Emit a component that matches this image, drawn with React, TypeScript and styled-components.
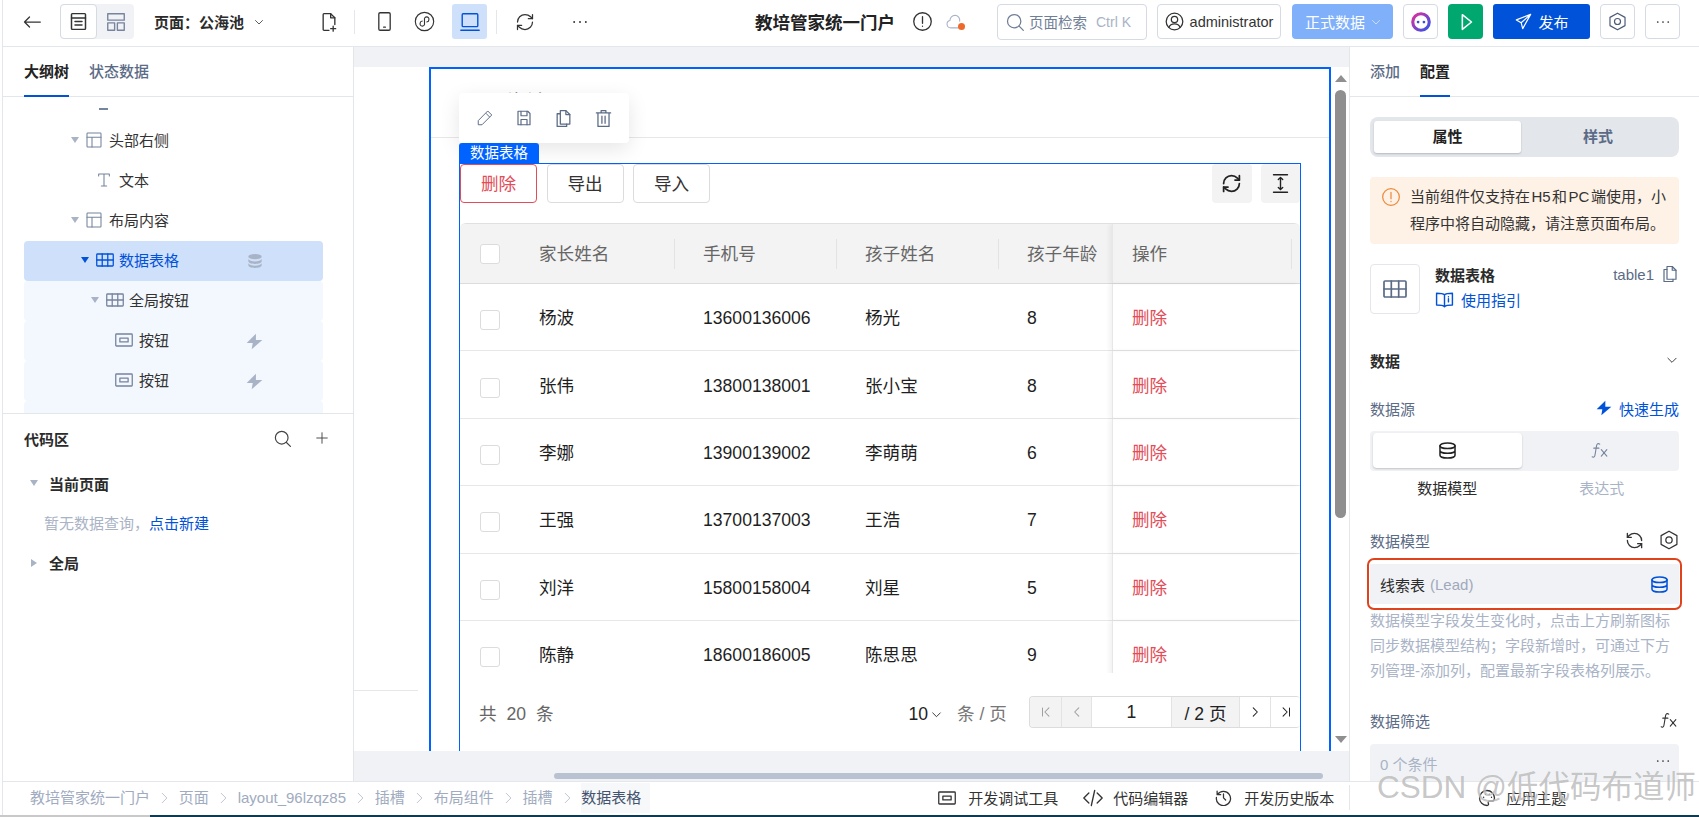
import React from "react";
import styled, { createGlobalStyle } from "styled-components";

const Global = createGlobalStyle`
  html, body { margin: 0; padding: 0; background: #fff; overflow: hidden; }
  body { font-family: "Liberation Sans", "Noto Sans CJK SC", sans-serif; font-size: 15px; color: #222; }
  * { box-sizing: border-box; }
`;

/* ---------- icons ---------- */
type IP = { size?: number; color?: string; sw?: number };
const Svg: React.FC<IP & { children: React.ReactNode; vb?: string }> = ({ size = 18, color = "currentColor", sw = 1.3, vb = "0 0 24 24", children }) => (
  <svg width={size} height={size} viewBox={vb} fill="none" stroke={color} strokeWidth={sw} strokeLinecap="round" strokeLinejoin="round" style={{ flex: "none" }}>
    {children}
  </svg>
);
const BackIcon = (p: IP) => <Svg {...p} sw={1.5}><path d="M22 12H3M9 6l-6 6 6 6" /></Svg>;
const PageIcon = (p: IP) => <Svg {...p} sw={1.7}><rect x="4" y="3" width="16" height="18" rx="1" /><path d="M4 8h16M8 12h8M8 16h8" /></Svg>;
const LayoutIcon = (p: IP) => <Svg {...p} sw={1.5}><rect x="3" y="3" width="18" height="7" /><rect x="3" y="13" width="7.5" height="8" /><rect x="13.5" y="13" width="7.5" height="8" /></Svg>;
const ChevronIcon = (p: IP) => <Svg {...p} sw={1.6}><path d="M5 9l7 7 7-7" /></Svg>;
const FilePlusIcon = (p: IP) => <Svg {...p} sw={1.6}><path d="M12 22H6a1 1 0 01-1-1V3a1 1 0 011-1h8l5 5v8" /><path d="M14 2v5h5M17 17v6M14 20h6" /></Svg>;
const PhoneIcon = (p: IP) => <Svg {...p} sw={1.5}><rect x="5.500" y="2" width="13" height="20" rx="1.500" /><path d="M11 18.500h2" /></Svg>;
const MiniIcon = (p: IP) => <Svg {...p}><circle cx="12" cy="12" r="10.500" /><path d="M7 14a2.600 2.600 0 105 0v-4a2.600 2.600 0 115 0c0 1.500-1 2.400-2.400 2.600M9.400 11.400C8 11.600 7 12.500 7 14" /></Svg>;
const LaptopIcon = (p: IP) => <Svg {...p} sw={1.5}><rect x="3.500" y="3" width="17" height="14" rx="1" /><path d="M2 21h20" /></Svg>;
const RefreshCw = (p: IP) => <Svg {...p} sw={p.sw ?? 1.5}><path d="M3 12a9 9 0 019-9 9.750 9.750 0 016.740 2.740L21 8" /><path d="M21 3v5h-5" /><path d="M21 12a9 9 0 01-9 9 9.750 9.750 0 01-6.740-2.740L3 16" /><path d="M8 16H3v5" /></Svg>;
const RefreshCcw = (p: IP) => <Svg {...p} sw={p.sw ?? 1.7}><path d="M21 12a9 9 0 00-9-9 9.750 9.750 0 00-6.740 2.740L3 8" /><path d="M3 3v5h5" /><path d="M3 12a9 9 0 009 9 9.750 9.750 0 006.740-2.740L21 16" /><path d="M16 16h5v5" /></Svg>;
const DotsIcon = (p: IP) => <Svg {...p} sw={2.300}><path d="M5 12h.01M12 12h.01M19 12h.01" /></Svg>;
const AlertIcon = (p: IP) => <Svg {...p} sw={1.500}><circle cx="12" cy="12" r="10" /><path d="M12 6.500v7.500M12 17.300v.2" /></Svg>;
const CloudIcon = (p: IP) => <Svg {...p}><path d="M16 19H7a4.500 4.500 0 01-1-8.900A6 6 0 0112 4a6 6 0 015.600 7" /></Svg>;
const SearchIcon = (p: IP) => <Svg {...p} sw={1.500}><circle cx="11" cy="11" r="8" /><path d="M17 17l5 5" /></Svg>;
const UserIcon = (p: IP) => <Svg {...p} sw={1.600}><circle cx="12" cy="12" r="10.500" /><circle cx="12" cy="9.500" r="4" /><path d="M5 19.500c1-3 3.600-4.500 7-4.500s6 1.500 7 4.500" /></Svg>;
const AiIcon = () => (
  <svg width="22" height="22" viewBox="0 0 24 24" style={{ flex: "none" }}>
    <defs>
      <linearGradient id="ai" x1="0" y1="0" x2="1" y2="1">
        <stop offset="0" stopColor="#e02f9a" />
        <stop offset="1" stopColor="#2f54eb" />
      </linearGradient>
    </defs>
    <circle cx="12" cy="12" r="9" fill="none" stroke="url(#ai)" strokeWidth="3.400" />
    <circle cx="8.800" cy="12" r="1.500" fill="#3a4fd8" />
    <circle cx="15.200" cy="12" r="1.500" fill="#3a4fd8" />
  </svg>
);
const PlayIcon = (p: IP) => <Svg {...p} sw={1.700}><path d="M8 4l10 8-10 8z" /></Svg>;
const SendIcon = (p: IP) => <Svg {...p} sw={1.500}><path d="M21 3L3 10l6 3.500L11 21zM21 3L9 13.500" /></Svg>;
const HexIcon = (p: IP) => <Svg {...p} sw={1.500}><path d="M12 1.500l9.500 5.300v10.400L12 22.500l-9.500-5.300V6.800z" /><circle cx="12" cy="12" r="3.800" /></Svg>;
const LayoutTreeIcon = (p: IP) => <Svg {...p} sw={1.600}><rect x="1.500" y="1.500" width="21" height="21" rx="1" /><path d="M1.500 8h21M9 8v14.500" /></Svg>;
const TableIcon = (p: IP) => <Svg {...p} sw={1.700}><rect x="1" y="4" width="22" height="16" rx="1" /><path d="M1 12h22M8.300 4v16M15.700 4v16" /></Svg>;
const ButtonIcon = (p: IP) => <Svg {...p} sw={1.700}><rect x="1" y="4" width="22" height="16" rx="1" /><rect x="6.500" y="9.500" width="11" height="5" /></Svg>;
const TextIcon = (p: IP) => <Svg {...p} sw={1.600}><path d="M4 6V3h16v3M12 3v18M8 21h8" /></Svg>;
const DbIcon = (p: IP) => <Svg {...p} sw={1.900}><ellipse cx="12" cy="6" rx="9.500" ry="3.600" /><path d="M2.500 6v12c0 2 4.200 3.600 9.500 3.600s9.500-1.600 9.500-3.600V6M2.500 12c0 2 4.200 3.600 9.500 3.600s9.500-1.600 9.500-3.600" /></Svg>;
const DbFillIcon = ({ size = 18, color = "#a9b3c6" }: IP) => (
  <svg width={size} height={size} viewBox="0 0 24 24" fill={color} style={{ flex: "none" }}>
    <ellipse cx="12" cy="5.500" rx="10" ry="4" />
    <path d="M2 9c1 2.400 5 3.600 10 3.600S21 11.400 22 9v3.500c0 2.200-4.500 4-10 4s-10-1.800-10-4z" />
    <path d="M2 15.500c1 2.400 5 3.600 10 3.600s9-1.200 10-3.600v3c0 2.200-4.500 4-10 4s-10-1.800-10-4z" />
  </svg>
);
const BoltIcon = ({ size = 18, color = "#a9b3c6" }: IP) => (
  <svg width={size} height={size} viewBox="0 0 24 24" fill={color} style={{ flex: "none" }}>
    <path d="M14 1L1 14h8.500L8 23l15-13h-9z" />
  </svg>
);
const PencilIcon = (p: IP) => <Svg {...p}><path d="M16 3l5 5L8 21H3v-5zM13.500 6l4.500 4.500" /></Svg>;
const SaveIcon = (p: IP) => <Svg {...p} sw={1.600}><path d="M4 3h13l3 3v15H4z" /><path d="M8 3v6h8V3M8 21v-7h8v7" /></Svg>;
const CopyIcon = (p: IP) => <Svg {...p} sw={1.600}><path d="M8 2h7l5 5v12H8z" /><path d="M15 2v5h5M8 6H4v16h12v-3" /></Svg>;
const TrashIcon = (p: IP) => <Svg {...p} sw={1.600}><path d="M3 5h18M9 5V2h6v3M5 5v17h14V5M10 9v9M14 9v9" /></Svg>;
const ExpandIcon = (p: IP) => <Svg {...p} sw={1.600}><path d="M4 2h16M4 22h16M12 5v14M9.500 7.500L12 5l2.500 2.500M9.500 16.500L12 19l2.500-2.500" /></Svg>;
const PlusIcon = (p: IP) => <Svg {...p} sw={1.600}><path d="M12 3v18M3 12h18" /></Svg>;
const ChevronLeftIcon = (p: IP) => <Svg {...p} sw={1.800}><path d="M15 5l-7 7 7 7" /></Svg>;
const ChevronRightIcon = (p: IP) => <Svg {...p} sw={1.800}><path d="M9 5l7 7-7 7" /></Svg>;
const CrumbArrow = (p: IP) => <Svg {...p} sw={1.300}><path d="M9 4l8 8-8 8" /></Svg>;
const FirstIcon = (p: IP) => <Svg {...p} sw={1.800}><path d="M6 5v14M17 5l-7 7 7 7" /></Svg>;
const LastIcon = (p: IP) => <Svg {...p} sw={1.800}><path d="M18 5v14M7 5l7 7-7 7" /></Svg>;
const BookIcon = (p: IP) => <Svg {...p} sw={1.800}><path d="M12 6C10 4 6 4 2 4v15c4 0 8 0 10 2 2-2 6-2 10-2V4c-4 0-8 0-10 2zM12 6v15" /><path d="M17 8.500v.2M17 11v4" /></Svg>;
const FxIcon = (p: IP) => <Svg {...p} sw={1.400}><path d="M11 4c-2-1.500-3.500-.5-4 2L5 18c-.5 2.500-2 3-3.500 2M3.500 9H10M13 11l7 8M20 11l-7 8" /></Svg>;
const CodeIcon = (p: IP) => <Svg {...p} sw={1.600}><path d="M7 6l-6 6 6 6M17 6l6 6-6 6M14 3l-4 18" /></Svg>;
const HistoryIcon = (p: IP) => <Svg {...p} sw={1.800}><path d="M3.500 8A10 10 0 112 12M3 3v5h5M12 7v5.500l3 3" /></Svg>;
const PaletteIcon = (p: IP) => <Svg {...p} sw={1.700}><path d="M12 2a10 10 0 100 20c2 0 2.500-1.500 1.800-2.800-.8-1.500 0-3.200 2-3.200H19c2 0 3-1.500 3-4 0-5.500-4.500-10-10-10z" /><path d="M7.500 11v.2M10 7v.2M15 7v.2M18 11v.2" /></Svg>;

/* ---------- shell ---------- */
const Shell = styled.div`
  position: relative;
  width: 1699px;
  height: 817px;
  overflow: hidden;
  display: flex;
  flex-direction: column;
  padding-left: 2px;
`;
const Framed = styled.div`
  border-left: 1px solid #e3e6eb;
  flex: 1;
  min-height: 0;
  display: flex;
  flex-direction: column;
`;
const TopBar = styled.header`
  height: 47px;
  flex: none;
  display: flex;
  align-items: center;
  border-bottom: 1px solid #e3e6eb;
  padding: 0 19px 3px 19px;
`;
const Slot = styled.div<{ $ml?: number }>`
  display: flex;
  align-items: center;
  flex: none;
  margin-left: ${(p) => p.$ml ?? 0}px;
`;
const ViewToggle = styled.div`
  display: flex;
  width: 74px;
  height: 35px;
  margin-left: 18px;
  background: #f0f2f5;
  border-radius: 4px;
`;
const ViewOption = styled.div<{ $on?: boolean }>`
  width: 37px;
  display: flex;
  align-items: center;
  justify-content: center;
  border-radius: 4px;
  color: ${(p) => (p.$on ? "#333" : "#76849e")};
  background: ${(p) => (p.$on ? "#fff" : "transparent")};
  border: ${(p) => (p.$on ? "1px solid #d5dae3" : "none")};
`;
const PageName = styled.div`
  margin-left: 20px;
  font-weight: 700;
  font-size: 15px;
  color: #2b2b2b;
  width: 90px;
  white-space: nowrap;
`;
const Sep = styled.div<{ $ml: number }>`
  width: 1px;
  height: 24px;
  background: #e3e6eb;
  margin-left: ${(p) => p.$ml}px;
  flex: none;
`;
const ActiveDevice = styled.div<{ $ml: number }>`
  width: 35px;
  height: 35px;
  margin-left: ${(p) => p.$ml}px;
  border-radius: 3px;
  background: #cfe0fb;
  color: #0052d9;
  display: flex;
  align-items: center;
  justify-content: center;
`;
const AppTitle = styled.div`
  margin-left: 165px;
  width: 140px;
  font-size: 17.500px;
  font-weight: 700;
  color: #222;
  white-space: nowrap;
`;
const RightTools = styled.div`
  margin-left: auto;
  display: flex;
  align-items: center;
  gap: 10px;
`;
const SearchBox = styled.div`
  width: 150px;
  height: 36px;
  border: 1px solid #d5dae3;
  border-radius: 4px;
  display: flex;
  align-items: center;
  padding-left: 7px;
  gap: 4px;
  color: #6f7d95;
  font-size: 14.500px;
  white-space: nowrap;
`;
const Hint = styled.span`
  color: #a9b3c6;
  margin-left: 5px;
  font-size: 14px;
`;
const UserBox = styled.div`
  width: 124px;
  height: 35px;
  border: 1px solid #d5dae3;
  border-radius: 4px;
  display: flex;
  align-items: center;
  justify-content: center;
  gap: 6px;
  color: #333;
  font-size: 14.500px;
`;
const EnvButton = styled.div`
  width: 101px;
  height: 35px;
  margin-left: 1px;
  border-radius: 4px;
  background: #80b0fa;
  color: #fff;
  display: flex;
  align-items: center;
  padding-left: 13px;
  gap: 5px;
  font-size: 15px;
  white-space: nowrap;
`;
const SquareBtn = styled.div<{ $bg?: string; $fg?: string }>`
  width: 35px;
  height: 35px;
  border-radius: 4px;
  border: ${(p) => (p.$bg ? "none" : "1px solid #d5dae3")};
  background: ${(p) => p.$bg ?? "#fff"};
  color: ${(p) => p.$fg ?? "#4b5b76"};
  display: flex;
  align-items: center;
  justify-content: center;
`;
const PublishBtn = styled.div`
  width: 97px;
  height: 35px;
  border-radius: 3px;
  background: #0052d9;
  color: #fff;
  display: flex;
  align-items: center;
  justify-content: center;
  gap: 5px;
  font-size: 15px;
`;
const CloudWrap = styled.div`
  position: relative;
  margin-left: 12px;
  width: 20px;
  height: 20px;
  color: #a9b3c6;
`;
const CloudDot = styled.span`
  position: absolute;
  right: 0;
  bottom: 2px;
  width: 7px;
  height: 7px;
  border-radius: 50%;
  background: #ed6a2c;
`;

const Body = styled.div`
  flex: 1;
  min-height: 0;
  display: flex;
`;

/* ---------- left ---------- */
const LeftPanel = styled.aside`
  width: 351px;
  flex: none;
  border-right: 1px solid #e3e6eb;
  display: flex;
  flex-direction: column;
`;
const Tabs = styled.div<{ $left: number }>`
  height: 50px;
  flex: none;
  border-bottom: 1px solid #e3e6eb;
  display: flex;
  gap: 20px;
  padding-left: ${(p) => p.$left}px;
`;
const Tab = styled.div<{ $on?: boolean }>`
  height: 50px;
  padding-bottom: 1px;
  display: flex;
  align-items: center;
  font-size: 15px;
  font-weight: ${(p) => (p.$on ? 700 : 500)};
  color: ${(p) => (p.$on ? "#222" : "#5b6b86")};
  border-bottom: 2px solid ${(p) => (p.$on ? "#0052d9" : "transparent")};
`;
const TreeClip = styled.div`
  height: 317px;
  flex: none;
  overflow: hidden;
  border-bottom: 1px solid #e3e6eb;
  padding: 0 30px 0 21px;
`;
const TreeList = styled.div`
  margin-top: -16px;
`;
const TreeRow = styled.div<{ $pad: number; $tone?: "on" | "soft" }>`
  height: 40px;
  display: flex;
  align-items: center;
  border-radius: 4px;
  padding: 0 60px 3px ${(p) => p.$pad}px;
  font-size: 15px;
  color: ${(p) => (p.$tone === "on" ? "#0052d9" : "#333")};
  background: ${(p) => (p.$tone === "on" ? "#cfe0fb" : p.$tone === "soft" ? "#f3f7fe" : "transparent")};
  & > svg { color: ${(p) => (p.$tone === "on" ? "#0052d9" : "#76849e")}; }
`;
const TreeStub = styled.span`
  width: 9px;
  height: 2px;
  margin: 18px 0 0 3px;
  background: #76849e;
`;
const Caret = styled.span<{ $on?: boolean; $side?: boolean }>`
  flex: none;
  width: 0;
  height: 0;
  margin-right: 7px;
  ${(p) =>
    p.$side
      ? `border-top: 4px solid transparent; border-bottom: 4px solid transparent; border-left: 6px solid #a9b3c6; margin-left: 1px; margin-right: 8px;`
      : `border-left: 4px solid transparent; border-right: 4px solid transparent; border-top: 6px solid ${p.$on ? "#0052d9" : "#a9b3c6"};`}
`;
const RowLabel = styled.span<{ $ml?: number }>`
  margin-left: ${(p) => p.$ml ?? 7}px;
`;
const RowEnd = styled.span`
  margin-left: auto;
  display: flex;
  margin-top: 3px;
`;
const CodeArea = styled.div`
  flex: 1;
  padding: 0 24px 0 21px;
`;
const CodeHead = styled.div`
  height: 48px;
  display: flex;
  align-items: center;
  font-weight: 700;
  color: #2b2b2b;
`;
const CodeTools = styled.div`
  margin-left: auto;
  display: flex;
  align-items: center;
  gap: 23px;
  color: #444;
`;
const CodeGroup = styled.div<{ $mt: number }>`
  height: 24px;
  margin-top: ${(p) => p.$mt}px;
  display: flex;
  align-items: center;
  padding-left: 6px;
  font-weight: 700;
  color: #2b2b2b;
  gap: 3px;
`;
const GroupName = styled.span`
  margin-left: 1px;
`;
const EmptyHint = styled.div`
  height: 24px;
  margin-top: 15.500px;
  padding-left: 20px;
  display: flex;
  align-items: center;
  color: #a9b3c6;
`;
const LinkText = styled.span`
  color: #0052d9;
`;

/* ---------- canvas ---------- */
const Canvas = styled.main`
  flex: 1;
  min-width: 0;
  display: flex;
  flex-direction: column;
  background: #f0f2f5;
`;
const CanvasTop = styled.div`
  height: 20px;
  flex: none;
`;
const Stage = styled.div`
  height: 684px;
  flex: none;
  background: #fff;
  display: flex;
`;
const Gutter = styled.div`
  width: 75px;
  flex: none;
`;
const GutterRule = styled.div`
  width: 64px;
  height: 1px;
  margin-top: 623px;
  background: #e7e7e7;
`;
const Frame = styled.div`
  position: relative;
  width: 902px;
  flex: none;
  border: 2px solid #0062ff;
  border-bottom: none;
`;
const PageHeader = styled.div`
  height: 69px;
  border-bottom: 1px solid #e7e7e7;
  padding: 22px 0 0 56px;
  font-size: 20px;
  line-height: 24px;
  color: #333;
`;
const FloatBar = styled.div`
  position: absolute;
  left: 28px;
  top: 24px;
  width: 170px;
  height: 50px;
  background: #fff;
  border-radius: 4px;
  box-shadow: 0 6px 20px rgba(0, 0, 0, 0.1);
  display: flex;
  align-items: center;
  padding-left: 17px;
  gap: 21px;
  color: #5b6b86;
  z-index: 2;
`;
const SelectTag = styled.div`
  position: absolute;
  left: 28px;
  top: 74px;
  width: 80px;
  height: 20px;
  background: #0062ff;
  color: #fff;
  border-radius: 3px 3px 0 0;
  font-size: 14.500px;
  line-height: 20px;
  text-align: center;
  z-index: 2;
`;
const TableBlock = styled.section`
  margin: 25px 0 0 28px;
  width: 842px;
  height: 588px;
  border: 1px solid #0062ff;
  border-bottom: none;
`;
const ActionBar = styled.div`
  height: 39px;
  display: flex;
  gap: 9.500px;
  margin-bottom: 20px;
`;
const ActionBtn = styled.div<{ $danger?: boolean }>`
  width: 77px;
  height: 39px;
  padding-bottom: 2px;
  border-radius: 4px;
  border: 1px solid ${(p) => (p.$danger ? "#e34d59" : "#dcdcdc")};
  color: ${(p) => (p.$danger ? "#e34d59" : "#333")};
  font-size: 17.600px;
  display: flex;
  align-items: center;
  justify-content: center;
`;
const IconAction = styled.div<{ $first?: boolean; $w: number }>`
  width: ${(p) => p.$w}px;
  height: 39px;
  border-radius: 4px;
  background: #f3f3f3;
  color: #222;
  display: flex;
  align-items: center;
  justify-content: center;
  margin-left: ${(p) => (p.$first ? "auto" : "0")};
`;
const TableClip = styled.div`
  height: 450px;
  overflow: hidden;
  border-top: 1px solid #e0e0e0;
  border-radius: 6px 6px 0 0;
`;
const GridRow = styled.div<{ $head?: boolean }>`
  display: grid;
  grid-template-columns: 79px 164px 162px 162px 85px 1fr;
  align-items: center;
  height: ${(p) => (p.$head ? "60px" : "67.400px")};
  background: ${(p) => (p.$head ? "#f3f3f3" : "#fff")};
  border-bottom: 1px solid ${(p) => (p.$head ? "#dcdcdc" : "#e7e7e7")};
  font-size: 17.600px;
  line-height: 26px;
  color: ${(p) => (p.$head ? "#666" : "#1f1f1f")};
`;
const CheckCell = styled.div<{ $head?: boolean }>`
  padding-left: 20px;
  display: flex;
  margin-top: ${(p) => (p.$head ? "0" : "6px")};
`;
const CheckBox = styled.span`
  width: 20px;
  height: 20px;
  background: #fff;
  border: 1px solid #dcdcdc;
  border-radius: 3px;
`;
const HeadCell = styled.div<{ $sep?: boolean }>`
  height: 30px;
  line-height: 30px;
  margin-right: 28px;
  border-right: 1px solid ${(p) => (p.$sep ? "#e3e3e3" : "transparent")};
  white-space: nowrap;
`;
const BodyCell = styled.div`
  white-space: nowrap;
  padding-top: 2px;
`;
const FixedCell = styled.div<{ $danger?: boolean }>`
  height: 100%;
  display: flex;
  align-items: center;
  padding: ${(p) => (p.$danger ? "2px" : "0")} 0 0 19px;
  border-left: 1px solid #e7e7e7;
  box-shadow: -3px 0 4px rgba(0, 0, 0, 0.05);
  color: ${(p) => (p.$danger ? "#e34d59" : "inherit")};
`;
const FixedLabel = styled.span`
  flex: 1;
  margin-right: 8px;
  border-right: 1px solid #e3e3e3;
  height: 30px;
  line-height: 30px;
`;
const TableFoot = styled.div`
  display: flex;
  align-items: flex-start;
  padding: 23px 0 0 19px;
  font-size: 17.600px;
  color: #666;
  height: 78px;
`;
const Total = styled.div`
  line-height: 36px;
  word-spacing: 5px;
`;
const PageSize = styled.div`
  margin-left: auto;
  display: flex;
  align-items: center;
  height: 36px;
  color: #222;
  gap: 2px;
`;
const PerPage = styled.div`
  line-height: 36px;
  margin-left: 14px;
  color: #777;
  width: 72px;
`;
const Pager = styled.div`
  display: flex;
  height: 32px;
  width: 271px;
  border: 1px solid #dcdcdc;
  border-right: none;
  border-radius: 4px;
  overflow: hidden;
`;
const PagerCell = styled.div<{ $w: number; $grey?: boolean; $fg?: string }>`
  width: ${(p) => p.$w}px;
  flex: none;
  background: ${(p) => (p.$grey ? "#f3f3f3" : "#fff")};
  border-left: 1px solid #e3e3e3;
  color: ${(p) => p.$fg ?? "#222"};
  display: flex;
  align-items: center;
  justify-content: center;
  &:first-child { border-left: none; }
`;
const VScroll = styled.div`
  flex: 1;
  display: flex;
  flex-direction: column;
  align-items: center;
  padding: 8px 0 8px;
  margin-left: 1px;
`;
const ArrowUp = styled.span`
  width: 0;
  height: 0;
  border-left: 6px solid transparent;
  border-right: 6px solid transparent;
  border-bottom: 7px solid #8f8f8f;
`;
const ArrowDown = styled.span`
  width: 0;
  height: 0;
  margin-top: auto;
  border-left: 6px solid transparent;
  border-right: 6px solid transparent;
  border-top: 7px solid #8f8f8f;
`;
const Thumb = styled.div`
  width: 11px;
  height: 428px;
  margin-top: 8px;
  border-radius: 6px;
  background: #8f8f8f;
`;
const CanvasBottom = styled.div`
  flex: 1;
  padding: 22px 0 0 200px;
`;
const HThumb = styled.div`
  width: 769px;
  height: 6px;
  border-radius: 3px;
  background: #b8c2d0;
`;

/* ---------- right ---------- */
const RightPanel = styled.aside`
  width: 350px;
  flex: none;
  border-left: 1px solid #e3e6eb;
  overflow: hidden;
  display: flex;
  flex-direction: column;
`;
const PanelSection = styled.div`
  padding: 0 20px;
`;
const Segment = styled.div`
  margin-top: 20px;
  height: 40px;
  border-radius: 8px;
  background: #e3e6eb;
  padding: 4px;
  display: flex;
`;
const SegItem = styled.div<{ $on?: boolean }>`
  flex: ${(p) => (p.$on ? "0 0 147px" : "1")};
  padding-bottom: 3px;
  border-radius: 3px;
  background: ${(p) => (p.$on ? "#fff" : "transparent")};
  box-shadow: ${(p) => (p.$on ? "0 1px 2px rgba(0,0,0,.2)" : "none")};
  color: ${(p) => (p.$on ? "#222" : "#5b6b86")};
  font-weight: 700;
  display: flex;
  align-items: center;
  justify-content: center;
`;
const Notice = styled.div`
  margin-top: 20px;
  height: 67px;
  border-radius: 4px;
  background: #fef1e6;
  padding: 6px 0 0 11px;
  display: flex;
  gap: 9px;
  line-height: 27px;
  color: #333;
  white-space: nowrap;
  word-spacing: -2.700px;
`;
const NoticeIcon = styled.div`
  padding-top: 4px;
  color: #ed8a3a;
`;
const CompCard = styled.div`
  margin-top: 20px;
  height: 50px;
  display: flex;
`;
const CompThumb = styled.div`
  width: 50px;
  height: 50px;
  border: 1px solid #e3e6eb;
  border-radius: 4px;
  display: flex;
  align-items: center;
  justify-content: center;
  color: #5b6b86;
`;
const CompInfo = styled.div`
  margin: -2px 0 0 15px;
  flex: 1;
`;
const CompTitleRow = styled.div`
  display: flex;
  align-items: center;
  height: 24px;
  font-weight: 700;
  color: #2b2b2b;
`;
const CompId = styled.span`
  margin-left: auto;
  display: flex;
  align-items: center;
  gap: 7px;
  font-weight: 400;
  color: #5b6b86;
`;
const GuideLink = styled.div`
  display: flex;
  align-items: center;
  gap: 7px;
  height: 26px;
  color: #0052d9;
`;
const PanelRule = styled.div`
  margin-top: 23px;
  height: 1px;
  background: #e3e6eb;
`;
const GroupHead = styled.div`
  height: 46px;
  display: flex;
  align-items: center;
  justify-content: space-between;
  font-weight: 700;
  color: #2b2b2b;
`;
const FieldHead = styled.div<{ $mt: number }>`
  margin-top: ${(p) => p.$mt}px;
  height: 24px;
  display: flex;
  align-items: center;
  color: #5b6b86;
`;
const FieldEnd = styled.div<{ $gap?: number; $fg?: string }>`
  margin-left: auto;
  display: flex;
  align-items: center;
  gap: ${(p) => p.$gap ?? 7}px;
  color: ${(p) => p.$fg ?? "#333"};
`;
const SourceSeg = styled.div`
  margin-top: 11px;
  height: 40px;
  border-radius: 4px;
  background: #f0f2f5;
  padding: 2px 0 3px 3px;
  display: flex;
`;
const SourceItem = styled.div<{ $on?: boolean }>`
  flex: ${(p) => (p.$on ? "0 0 149px" : "1")};
  border-radius: 4px;
  background: ${(p) => (p.$on ? "#fff" : "transparent")};
  box-shadow: ${(p) => (p.$on ? "0 1px 2px rgba(0,0,0,.2)" : "none")};
  color: ${(p) => (p.$on ? "#222" : "#76849e")};
  display: flex;
  align-items: center;
  justify-content: center;
`;
const SourceLabels = styled.div`
  margin-top: 8px;
  height: 20px;
  display: flex;
`;
const SourceLabel = styled.div<{ $on?: boolean }>`
  flex: 1;
  text-align: center;
  line-height: 20px;
  color: ${(p) => (p.$on ? "#2b2b2b" : "#a9b3c6")};
`;
const ModelOutline = styled.div`
  margin: 6px -3px 0;
  height: 52px;
  border: 2px solid #e0431c;
  border-radius: 7px;
  padding: 4px 1px;
`;
const ModelSelect = styled.div`
  height: 40px;
  background: #f0f2f5;
  display: flex;
  align-items: center;
  padding: 0 10px;
  color: #2b2b2b;
`;
const Muted = styled.span`
  color: #a0a9bb;
  margin-left: 5px;
`;
const Desc = styled.div`
  margin-top: -2px;
  line-height: 25px;
  color: #a9b3c6;
`;
const FilterBox = styled.div`
  margin-top: 12px;
  height: 60px;
  background: #f0f2f5;
  border-radius: 4px;
  padding: 8px 7px 0 10px;
  display: flex;
  align-items: flex-start;
  color: #a9b3c6;
  line-height: 26px;
`;

/* ---------- bottom ---------- */
const BottomBar = styled.footer`
  height: 34px;
  flex: none;
  border-top: 1px solid #e3e6eb;
  display: flex;
  align-items: center;
  padding: 0 0 2px 27px;
  font-size: 15px;
`;
const Crumb = styled.span<{ $on?: boolean }>`
  color: ${(p) => (p.$on ? "#44546f" : "#a0abc0")};
  background: ${(p) => (p.$on ? "#f7f8fa" : "transparent")};
  padding-right: ${(p) => (p.$on ? "9px" : "0")};
  line-height: 30px;
`;
const CrumbSep = styled.span`
  width: 28.800px;
  display: flex;
  justify-content: center;
  color: #a9b3c6;
`;
const DevTool = styled.div<{ $ml: number; $gap: number }>`
  margin-left: ${(p) => p.$ml}px;
  display: flex;
  align-items: center;
  gap: ${(p) => p.$gap}px;
  color: #333;
  white-space: nowrap;
`;
const BarDivider = styled.div`
  width: 1px;
  height: 25px;
  background: #e3e6eb;
  margin-left: 15px;
`;
const Strip = styled.div`
  height: 2px;
  flex: none;
  display: flex;
  background: #0e3a52;
  margin-left: -2px;
`;
const StripStart = styled.div`
  width: 150px;
  background: #c9c9c9;
`;
const Watermark = styled.div`
  position: absolute;
  left: 1377px;
  top: 767px;
  font-size: 31.500px;
  line-height: 40px;
  color: rgba(120, 120, 120, 0.42);
  text-shadow: 0 0 1px rgba(255, 255, 255, 0.8);
  white-space: nowrap;
  pointer-events: none;
`;

const rows = [
  ["杨波", "13600136006", "杨光", "8"],
  ["张伟", "13800138001", "张小宝", "8"],
  ["李娜", "13900139002", "李萌萌", "6"],
  ["王强", "13700137003", "王浩", "7"],
  ["刘洋", "15800158004", "刘星", "5"],
  ["陈静", "18600186005", "陈思思", "9"],
];
const crumbs = ["教培管家统一门户", "页面", "layout_96lzqz85", "插槽", "布局组件", "插槽"];

export default function App() {
  return (
    <Shell>
      <Global />
      <Framed>
        <TopBar>
          <Slot><BackIcon size={20} color="#333" /></Slot>
          <ViewToggle>
            <ViewOption $on><PageIcon size={21} /></ViewOption>
            <ViewOption><LayoutIcon size={22} /></ViewOption>
          </ViewToggle>
          <PageName>页面：公海池</PageName>
          <Slot $ml={9}><ChevronIcon size={12} color="#333" /></Slot>
          <Slot $ml={54}><FilePlusIcon size={20} color="#333" /></Slot>
          <Sep $ml={15} />
          <Slot $ml={19}><PhoneIcon size={21} color="#333" /></Slot>
          <Slot $ml={19}><MiniIcon size={21} color="#333" /></Slot>
          <ActiveDevice $ml={17}><LaptopIcon size={22} /></ActiveDevice>
          <Sep $ml={9} />
          <Slot $ml={18}><RefreshCw size={20} color="#333" /></Slot>
          <Slot $ml={35}><DotsIcon size={20} color="#333" /></Slot>
          <AppTitle>教培管家统一门户</AppTitle>
          <Slot $ml={17}><AlertIcon size={21} color="#333" /></Slot>
          <CloudWrap><CloudIcon size={20} /><CloudDot /></CloudWrap>
          <RightTools>
            <SearchBox><SearchIcon size={20} />页面检索<Hint>Ctrl K</Hint></SearchBox>
            <UserBox><UserIcon size={19} />administrator</UserBox>
            <EnvButton>正式数据<ChevronIcon size={12} color="#dbe7fd" /></EnvButton>
            <SquareBtn><AiIcon /></SquareBtn>
            <SquareBtn $bg="#00a870" $fg="#fff"><PlayIcon size={22} /></SquareBtn>
            <PublishBtn><SendIcon size={19} />发布</PublishBtn>
            <SquareBtn><HexIcon size={19} /></SquareBtn>
            <SquareBtn $fg="#333"><DotsIcon size={18} /></SquareBtn>
          </RightTools>
        </TopBar>
        <Body>
          <LeftPanel>
            <Tabs $left={21}>
              <Tab $on>大纲树</Tab>
              <Tab>状态数据</Tab>
            </Tabs>
            <TreeClip>
              <TreeList>
                <TreeRow $pad={72}><TreeStub /></TreeRow>
                <TreeRow $pad={47}><Caret /><LayoutTreeIcon size={16} /><RowLabel>头部右侧</RowLabel></TreeRow>
                <TreeRow $pad={72}><TextIcon size={16} /><RowLabel>文本</RowLabel></TreeRow>
                <TreeRow $pad={47}><Caret /><LayoutTreeIcon size={16} /><RowLabel>布局内容</RowLabel></TreeRow>
                <TreeRow $pad={57} $tone="on"><Caret $on /><TableIcon size={18} /><RowLabel $ml={5}>数据表格</RowLabel><RowEnd><DbFillIcon size={16} /></RowEnd></TreeRow>
                <TreeRow $pad={67} $tone="soft"><Caret /><TableIcon size={18} /><RowLabel $ml={5}>全局按钮</RowLabel></TreeRow>
                <TreeRow $pad={91} $tone="soft"><ButtonIcon size={18} /><RowLabel $ml={6}>按钮</RowLabel><RowEnd><BoltIcon size={17} /></RowEnd></TreeRow>
                <TreeRow $pad={91} $tone="soft"><ButtonIcon size={18} /><RowLabel $ml={6}>按钮</RowLabel><RowEnd><BoltIcon size={17} /></RowEnd></TreeRow>
                <TreeRow $pad={91} $tone="soft" />
              </TreeList>
            </TreeClip>
            <CodeArea>
              <CodeHead>
                代码区
                <CodeTools><SearchIcon size={19} /><PlusIcon size={14} /></CodeTools>
              </CodeHead>
              <CodeGroup $mt={9}><Caret /><GroupName>当前页面</GroupName></CodeGroup>
              <EmptyHint>暂无数据查询，<LinkText>点击新建</LinkText></EmptyHint>
              <CodeGroup $mt={16}><Caret $side /><GroupName>全局</GroupName></CodeGroup>
            </CodeArea>
          </LeftPanel>

          <Canvas>
            <CanvasTop />
            <Stage>
              <Gutter><GutterRule /></Gutter>
              <Frame>
                <PageHeader>公海池</PageHeader>
                <FloatBar>
                  <PencilIcon size={18} />
                  <SaveIcon size={18} />
                  <CopyIcon size={19} />
                  <TrashIcon size={19} />
                </FloatBar>
                <SelectTag>数据表格</SelectTag>
                <TableBlock>
                  <ActionBar>
                    <ActionBtn $danger>删除</ActionBtn>
                    <ActionBtn>导出</ActionBtn>
                    <ActionBtn>导入</ActionBtn>
                    <IconAction $first $w={40}><RefreshCw size={21} sw={2} /></IconAction>
                    <IconAction $w={39}><ExpandIcon size={21} /></IconAction>
                  </ActionBar>
                  <TableClip>
                    <GridRow $head>
                      <CheckCell $head><CheckBox /></CheckCell>
                      <HeadCell $sep>家长姓名</HeadCell>
                      <HeadCell $sep>手机号</HeadCell>
                      <HeadCell $sep>孩子姓名</HeadCell>
                      <HeadCell>孩子年龄</HeadCell>
                      <FixedCell><FixedLabel>操作</FixedLabel></FixedCell>
                    </GridRow>
                    {rows.map((r) => (
                      <GridRow key={r[1]}>
                        <CheckCell><CheckBox /></CheckCell>
                        {r.map((c) => <BodyCell key={c}>{c}</BodyCell>)}
                        <FixedCell $danger>删除</FixedCell>
                      </GridRow>
                    ))}
                  </TableClip>
                  <TableFoot>
                    <Total>共 20 条</Total>
                    <PageSize>10<ChevronIcon size={13} color="#222" /></PageSize>
                    <PerPage>条 / 页</PerPage>
                    <Pager>
                      <PagerCell $w={31} $grey $fg="#a0a0a0"><FirstIcon size={14} /></PagerCell>
                      <PagerCell $w={30} $grey $fg="#a0a0a0"><ChevronLeftIcon size={14} /></PagerCell>
                      <PagerCell $w={80}>1</PagerCell>
                      <PagerCell $w={68} $grey>/ 2 页</PagerCell>
                      <PagerCell $w={31}><ChevronRightIcon size={14} /></PagerCell>
                      <PagerCell $w={31}><LastIcon size={14} /></PagerCell>
                    </Pager>
                  </TableFoot>
                </TableBlock>
              </Frame>
              <VScroll>
                <ArrowUp />
                <Thumb />
                <ArrowDown />
              </VScroll>
            </Stage>
            <CanvasBottom><HThumb /></CanvasBottom>
          </Canvas>

          <RightPanel>
            <Tabs $left={20}>
              <Tab>添加</Tab>
              <Tab $on>配置</Tab>
            </Tabs>
            <PanelSection>
              <Segment>
                <SegItem $on>属性</SegItem>
                <SegItem>样式</SegItem>
              </Segment>
              <Notice>
                <NoticeIcon><AlertIcon size={20} /></NoticeIcon>
                <div>当前组件仅支持在 H5 和 PC 端使用，小<br />程序中将自动隐藏，请注意页面布局。</div>
              </Notice>
              <CompCard>
                <CompThumb><TableIcon size={24} /></CompThumb>
                <CompInfo>
                  <CompTitleRow>
                    数据表格
                    <CompId>table1<CopyIcon size={18} /></CompId>
                  </CompTitleRow>
                  <GuideLink><BookIcon size={19} />使用指引</GuideLink>
                </CompInfo>
              </CompCard>
            </PanelSection>
            <PanelRule />
            <PanelSection>
              <GroupHead>数据<ChevronIcon size={14} color="#333" /></GroupHead>
              <FieldHead $mt={13}>
                数据源
                <FieldEnd $fg="#0052d9"><BoltIcon size={16} color="#0052d9" />快速生成</FieldEnd>
              </FieldHead>
              <SourceSeg>
                <SourceItem $on><DbIcon size={19} /></SourceItem>
                <SourceItem><FxIcon size={19} /></SourceItem>
              </SourceSeg>
              <SourceLabels>
                <SourceLabel $on>数据模型</SourceLabel>
                <SourceLabel>表达式</SourceLabel>
              </SourceLabels>
              <FieldHead $mt={29}>
                数据模型
                <FieldEnd $gap={15}><RefreshCcw size={19} /><HexIcon size={20} /></FieldEnd>
              </FieldHead>
              <ModelOutline>
                <ModelSelect>
                  线索表<Muted>(Lead)</Muted>
                  <FieldEnd $fg="#0052d9"><DbIcon size={19} /></FieldEnd>
                </ModelSelect>
              </ModelOutline>
              <Desc>
                数据模型字段发生变化时，点击上方刷新图标<br />
                同步数据模型结构；字段新增时，可通过下方<br />
                列管理-添加列，配置最新字段表格列展示。
              </Desc>
              <FieldHead $mt={25}>
                数据筛选
                <FieldEnd><FxIcon size={19} /></FieldEnd>
              </FieldHead>
              <FilterBox>
                0 个条件
                <FieldEnd><DotsIcon size={18} /></FieldEnd>
              </FilterBox>
            </PanelSection>
          </RightPanel>
        </Body>
        <BottomBar>
          {crumbs.map((c, i) => (
            <React.Fragment key={i}>
              <Crumb>{c}</Crumb>
              <CrumbSep><CrumbArrow size={14} /></CrumbSep>
            </React.Fragment>
          ))}
          <Crumb $on>数据表格</Crumb>
          <DevTool $ml={288} $gap={12}><ButtonIcon size={18} />开发调试工具</DevTool>
          <DevTool $ml={25} $gap={10}><CodeIcon size={20} />代码编辑器</DevTool>
          <DevTool $ml={27} $gap={12}><HistoryIcon size={17} />开发历史版本</DevTool>
          <BarDivider />
          <DevTool $ml={128} $gap={10}><PaletteIcon size={18} />应用主题</DevTool>
        </BottomBar>
      </Framed>
      <Strip><StripStart /></Strip>
      <Watermark>CSDN @低代码布道师</Watermark>
    </Shell>
  );
}
